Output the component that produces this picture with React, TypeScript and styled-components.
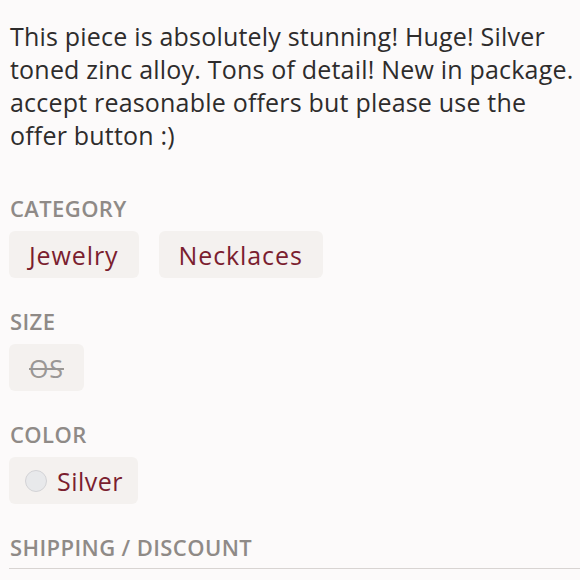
import styled, { createGlobalStyle } from "styled-components";

/* page */
const Global = createGlobalStyle`
  html, body {
    margin: 0;
    background: #fcfafa;
  }
  body {
    font-family: "Open Sans", "Liberation Sans", sans-serif;
  }
`;

const Page = styled.main`
  padding: 20px 0 0 9px;
  overflow: hidden;
  height: 580px;
  box-sizing: border-box;
`;

const Description = styled.p`
  margin: 0 0 44px 1px;
  font-size: 25px;
  line-height: 33px;
  letter-spacing: 0.2px;
  color: #2e2c2c;
`;

const Section = styled.section`
  display: flex;
  flex-direction: column;
  align-items: flex-start;
  gap: 11px;
  margin-bottom: 31px;
`;

const Label = styled.h4<{ divided?: boolean }>`
  margin: 0;
  padding-left: 1px;
  font-size: 22px;
  line-height: 24px;
  font-weight: 600;
  letter-spacing: 0.4px;
  color: #8f8a87;
  align-self: stretch;
  ${({ divided }) =>
    divided &&
    `
    padding-bottom: 9px;
    border-bottom: 1px solid #d8d4d2;
  `}
`;

const ChipRow = styled.div`
  display: flex;
  gap: 20px;
`;

const Chip = styled.span<{ muted?: boolean }>`
  display: inline-flex;
  align-items: center;
  gap: 10px;
  height: 47px;
  padding: 0 20px;
  box-sizing: border-box;
  border-radius: 6px;
  background: #f4f1ef;
  font-size: 25px;
  letter-spacing: 0.9px;
  color: ${({ muted }) => (muted ? "#9a9795" : "#7b1e2f")};
  text-decoration: ${({ muted }) => (muted ? "line-through" : "none")};
`;

const ColorChip = styled(Chip)`
  padding: 0 15px 0 16px;
  letter-spacing: 0.5px;
`;

const Swatch = styled.span<{ tone: string }>`
  width: 22px;
  height: 22px;
  border-radius: 50%;
  background: ${({ tone }) => tone};
  border: 1px solid #d3d3d6;
  box-sizing: border-box;
`;

export default function App() {
  return (
    <>
      <Global />
      <Page>
        <Description>
          This piece is absolutely stunning! Huge! Silver toned zinc alloy. Tons of detail! New in package.
          accept reasonable offers but please use the offer button :)
        </Description>

        <Section>
          <Label>CATEGORY</Label>
          <ChipRow>
            <Chip>Jewelry</Chip>
            <Chip>Necklaces</Chip>
          </ChipRow>
        </Section>

        <Section>
          <Label>SIZE</Label>
          <Chip muted>OS</Chip>
        </Section>

        <Section>
          <Label>COLOR</Label>
          <ColorChip>
            <Swatch tone="#e8e9eb" />
            Silver
          </ColorChip>
        </Section>

        <Section>
          <Label divided>SHIPPING / DISCOUNT</Label>
        </Section>
      </Page>
    </>
  );
}
